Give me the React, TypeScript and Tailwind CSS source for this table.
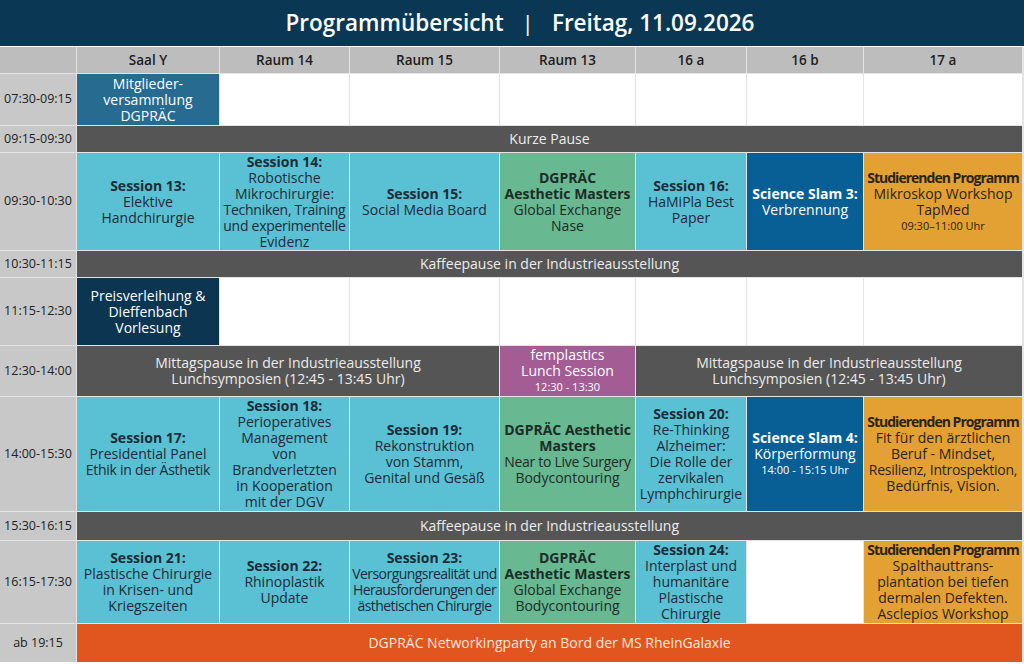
import React from 'react';

const font = { fontFamily: '"Open Sans", "Noto Sans", sans-serif' };

type Tone = 'cyan' | 'green' | 'slam' | 'orange' | 'navy' | 'steel' | 'purple' | 'break' | 'party' | 'empty';

const tones: Record<Tone, string> = {
  cyan: 'bg-[#5ac0d3] text-[#1c2c38]',
  green: 'bg-[#68b892] text-[#1c2c26]',
  slam: 'bg-[#085f96] text-white',
  orange: 'bg-[#e3a134] text-[#2b2316]',
  navy: 'bg-[#0b3550] text-white',
  steel: 'bg-[#276b91] text-white',
  purple: 'bg-[#a35c94] text-white',
  break: 'bg-[#555555] text-[#ececec]',
  party: 'bg-[#e1561f] text-[#fbe9df]',
  empty: 'bg-white',
};

function Cell({ tone, span = '', children }: { tone: Tone; span?: string; children?: React.ReactNode }) {
  return (
    <div className={`${tones[tone]} ${span} flex flex-col items-center justify-center text-center text-[14px] leading-[16px] whitespace-nowrap overflow-visible`}>
      {children}
    </div>
  );
}

function Time({ children }: { children: React.ReactNode }) {
  return (
    <div className="bg-[#c8c8c8] text-[#222] flex items-center justify-center text-[12.5px]">{children}</div>
  );
}

function Head({ children }: { children?: React.ReactNode }) {
  return (
    <div className="bg-[#bdbdbd] text-[#1e1e1e] flex items-center justify-center text-[13.5px] font-semibold">{children}</div>
  );
}

const B = ({ children }: { children: React.ReactNode }) => <span className="font-bold">{children}</span>;
const Stud = () => <span className="font-bold tracking-[-0.07em]">Studierenden Programm</span>;
const Small = ({ children }: { children: React.ReactNode }) => <span className="text-[11px] leading-[16px]">{children}</span>;

export default function App() {
  return (
    <div style={font} className="w-[1024px] h-[664px] bg-white overflow-hidden">
      <div className="h-[46px] bg-[#0a3854] text-white flex items-center justify-center pl-[16px] text-[22.5px] font-semibold">
        <span>Programmübersicht</span>
        <span className="mx-[18px] font-normal">|</span>
        <span>Freitag, 11.09.2026</span>
      </div>
      <div className="mt-px bg-[#e4e4e4] grid gap-px grid-cols-[76px_142px_129px_149px_135px_110px_116px_158px] grid-rows-[26px_51px_26px_97px_26px_67px_50px_114px_28px_82px_38px] pr-[2px]">
        <Head />
        <Head>Saal Y</Head>
        <Head>Raum 14</Head>
        <Head>Raum 15</Head>
        <Head>Raum 13</Head>
        <Head>16 a</Head>
        <Head>16 b</Head>
        <Head>17 a</Head>

        <Time>07:30-09:15</Time>
        <Cell tone="steel">Mitglieder-<br />versammlung<br />DGPRÄC</Cell>
        <Cell tone="empty" />
        <Cell tone="empty" />
        <Cell tone="empty" />
        <Cell tone="empty" />
        <Cell tone="empty" />
        <Cell tone="empty" />

        <Time>09:15-09:30</Time>
        <Cell tone="break" span="col-span-7">Kurze Pause</Cell>

        <Time>09:30-10:30</Time>
        <Cell tone="cyan"><B>Session 13:</B>Elektive<br />Handchirurgie</Cell>
        <Cell tone="cyan"><B>Session 14:</B>Robotische<br />Mikrochirurgie:<br /><span className="tracking-[-0.02em]">Techniken, Training</span><span className="tracking-[-0.02em]">und experimentelle</span>Evidenz</Cell>
        <Cell tone="cyan"><B>Session 15:</B>Social Media Board</Cell>
        <Cell tone="green"><B>DGPRÄC</B><B>Aesthetic Masters</B>Global Exchange<br />Nase</Cell>
        <Cell tone="cyan"><B>Session 16:</B>HaMiPla Best<br />Paper</Cell>
        <Cell tone="slam"><B>Science Slam 3:</B>Verbrennung</Cell>
        <Cell tone="orange"><Stud />Mikroskop Workshop<br />TapMed<Small>09:30–11:00 Uhr</Small></Cell>

        <Time>10:30-11:15</Time>
        <Cell tone="break" span="col-span-7">Kaffeepause in der Industrieausstellung</Cell>

        <Time>11:15-12:30</Time>
        <Cell tone="navy">Preisverleihung &amp;<br />Dieffenbach<br />Vorlesung</Cell>
        <Cell tone="empty" />
        <Cell tone="empty" />
        <Cell tone="empty" />
        <Cell tone="empty" />
        <Cell tone="empty" />
        <Cell tone="empty" />

        <Time>12:30-14:00</Time>
        <Cell tone="break" span="col-span-3">Mittagspause in der Industrieausstellung<br />Lunchsymposien (12:45 - 13:45 Uhr)</Cell>
        <Cell tone="purple">femplastics<br />Lunch Session<Small>12:30 - 13:30</Small></Cell>
        <Cell tone="break" span="col-span-3">Mittagspause in der Industrieausstellung<br />Lunchsymposien (12:45 - 13:45 Uhr)</Cell>

        <Time>14:00-15:30</Time>
        <Cell tone="cyan"><B>Session 17:</B>Presidential Panel<br /><span className="tracking-[-0.02em]">Ethik in der Ästhetik</span></Cell>
        <Cell tone="cyan"><B>Session 18:</B>Perioperatives<br />Management<br />von<br />Brandverletzten<br />in Kooperation<br />mit der DGV</Cell>
        <Cell tone="cyan"><B>Session 19:</B>Rekonstruktion<br />von Stamm,<br />Genital und Gesäß</Cell>
        <Cell tone="green"><B>DGPRÄC Aesthetic</B><B>Masters</B><span className="tracking-[-0.02em]">Near to Live Surgery</span>Bodycontouring</Cell>
        <Cell tone="cyan"><B>Session 20:</B>Re-Thinking<br />Alzheimer:<br />Die Rolle der<br />zervikalen<br />Lymphchirurgie</Cell>
        <Cell tone="slam"><B>Science Slam 4:</B>Körperformung<Small>14:00 - 15:15 Uhr</Small></Cell>
        <Cell tone="orange"><Stud />Fit für den ärztlichen<br />Beruf - Mindset,<br /><span className="tracking-[-0.02em]">Resilienz, Introspektion,</span>Bedürfnis, Vision.</Cell>

        <Time>15:30-16:15</Time>
        <Cell tone="break" span="col-span-7">Kaffeepause in der Industrieausstellung</Cell>

        <Time>16:15-17:30</Time>
        <Cell tone="cyan"><B>Session 21:</B>Plastische Chirurgie<br />in Krisen- und<br />Kriegszeiten</Cell>
        <Cell tone="cyan"><B>Session 22:</B>Rhinoplastik<br />Update</Cell>
        <Cell tone="cyan"><B>Session 23:</B><span className="tracking-[-0.04em]">Versorgungsrealität und<br />Herausforderungen der<br />ästhetischen Chirurgie</span></Cell>
        <Cell tone="green"><B>DGPRÄC</B><B>Aesthetic Masters</B>Global Exchange<br />Bodycontouring</Cell>
        <Cell tone="cyan"><B>Session 24:</B>Interplast und<br />humanitäre<br />Plastische<br />Chirurgie</Cell>
        <Cell tone="empty" />
        <Cell tone="orange"><Stud />Spalthauttrans-<br />plantation bei tiefen<br />dermalen Defekten.<br />Asclepios Workshop</Cell>

        <Time>ab 19:15</Time>
        <Cell tone="party" span="col-span-7">DGPRÄC Networkingparty an Bord der MS RheinGalaxie</Cell>
      </div>
    </div>
  );
}
